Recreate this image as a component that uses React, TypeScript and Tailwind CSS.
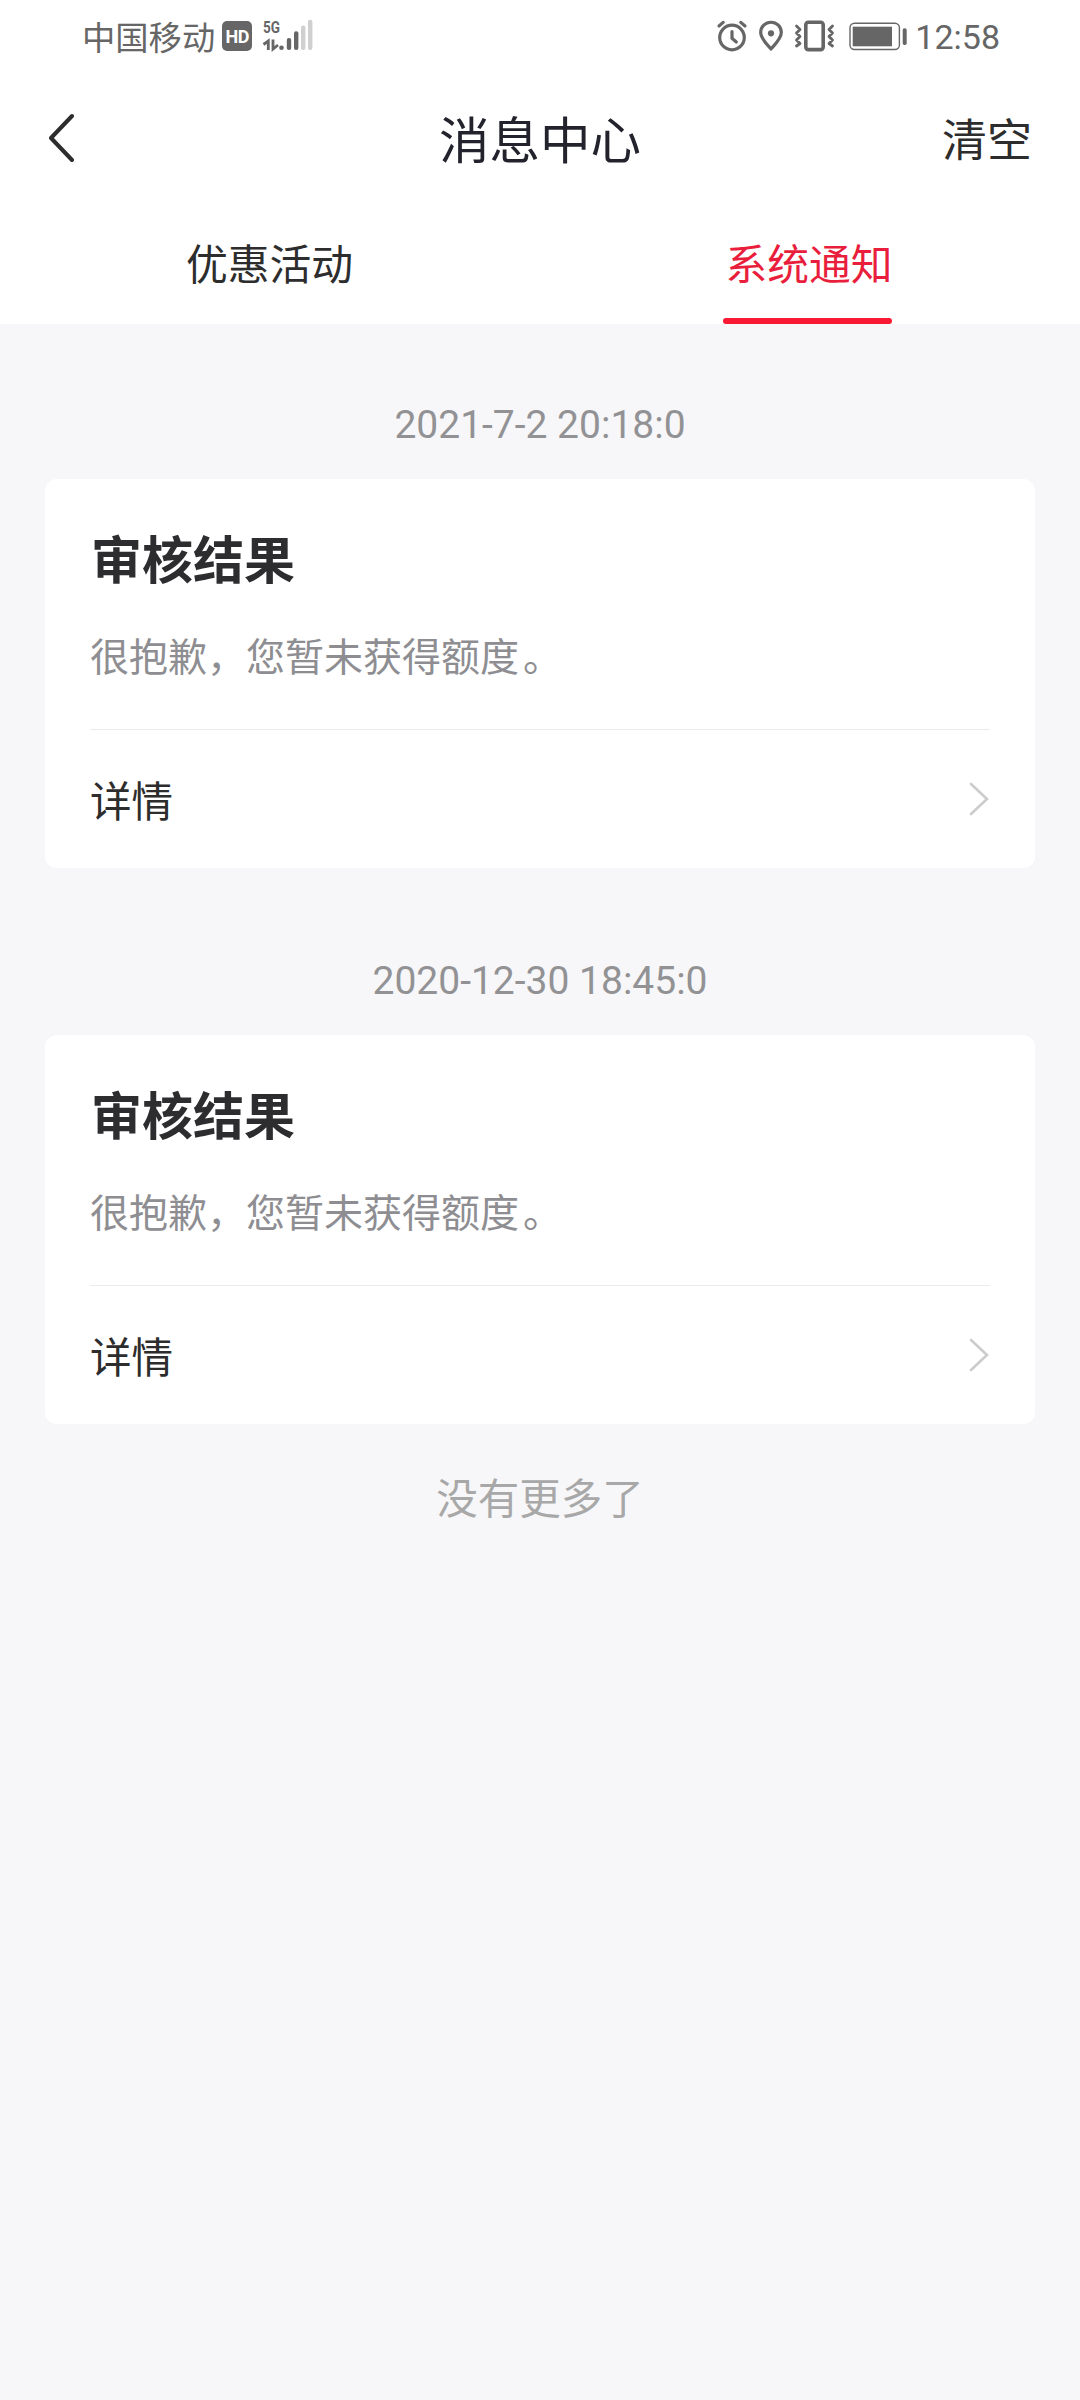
import { useState } from "react"

const messages = [
    { id: 1, time: "2021-7-2 20:18:0", title: "审核结果", body: "很抱歉，您暂未获得额度。" },
    { id: 2, time: "2020-12-30 18:45:0", title: "审核结果", body: "很抱歉，您暂未获得额度。" },
]

const tabs = ["优惠活动", "系统通知"]

function SignalIcon() {
    return (
        <svg className="ml-2.5" width="52" height="44" viewBox="262 14 52 44" fill="#666">
            <text x="263" y="34" fontSize="16" fontWeight="700" fontFamily="Roboto, sans-serif" textLength="17" lengthAdjust="spacingAndGlyphs">5G</text>
            <path d="M263.5 45.5L268.3 42V51M273 40.5V50L278 46" fill="none" stroke="#666" strokeWidth="2.8" />
            <circle cx="281.5" cy="48.8" r="2.3" />
            <rect x="286.8" y="39" width="4.4" height="12" rx="2" />
            <rect x="294" y="32.3" width="4.4" height="18.7" rx="2" />
            <rect x="301" y="26.5" width="4.4" height="24.5" rx="2" fill="#d0d0d0" />
            <rect x="308" y="20.8" width="4.4" height="30.2" rx="2" fill="#d0d0d0" />
        </svg>
    )
}

function SystemIcons() {
    return (
        <svg width="192" height="34" viewBox="716 19 192 34" fill="none" stroke="#666" strokeWidth="3.2" strokeLinecap="round" strokeLinejoin="round">
            <circle cx="732" cy="37.5" r="12.3" />
            <path d="M732 31.5V38.3L736.3 42M719 26L723.2 22.4M740.8 22.4L745 26" />
            <path d="M771 49C767 44.5 760.7 38.5 760.7 32.5A10.3 10.3 0 0 1 781.3 32.5C781.3 38.5 775 44.5 771 49Z" />
            <circle cx="771" cy="33.3" r="3.1" fill="#666" stroke="none" />
            <rect x="805.8" y="22.2" width="17.4" height="27.4" rx="2.5" strokeWidth="3.6" />
            <path d="M796.5 26L800 29.5L796.5 33L800 36.5L796.5 40L800 43.5L796.5 46M832.5 26L829 29.5L832.5 33L829 36.5L832.5 40L829 43.5L832.5 46" strokeWidth="2.8" />
            <rect x="850" y="23.3" width="49.4" height="26.2" rx="4.5" strokeWidth="1.4" />
            <rect x="852.7" y="26.7" width="39.3" height="19.6" fill="#666" stroke="none" />
            <rect x="902.7" y="28.3" width="4" height="16.7" rx="1.8" fill="#666" stroke="none" />
        </svg>
    )
}

function StatusBar() {
    return (
        <div className="flex h-[70px] items-center pl-[82px] pr-20 text-[#666]">
            <span className="pt-px text-[33.3px] leading-[70px]">中国移动</span>
            <span className="ml-[7px] mt-0.5 h-[30px] w-[30px] rounded-[5px] bg-[#666] text-center font-[Roboto,sans-serif] text-[18px] leading-[31px] font-bold tracking-[-0.5px] text-white">HD</span>
            <SignalIcon />
            <div className="ml-auto flex items-center">
                <div className="mt-0.5">
                    <SystemIcons />
                </div>
                <span className="ml-[7px] mt-[3px] font-[Roboto,sans-serif] text-[34px] leading-[66px]">12:58</span>
            </div>
        </div>
    )
}

function MessageBody({ text }: { text: string }) {
    return (
        <p className="mt-[37px] pb-[45px] text-[39px] leading-[60px] text-[#8e8e92]">
            {text.split(/(。)/).map((part, i) => (
                <span key={i} className={part === "。" ? "pl-1" : undefined}>{part}</span>
            ))}
        </p>
    )
}

function MessageCard({ title, body }: { title: string; body: string }) {
    return (
        <article className="mx-[45px] h-[389px] rounded-xl bg-white px-[45px] pt-12">
            <h2 className="pl-px text-[51px] leading-[60px] font-bold text-[#2d2d30]">{title}</h2>
            <MessageBody text={body} />
            <button className="flex h-[138px] w-full items-center justify-between border-t border-[#ebebeb]">
                <span className="pt-0.5 text-[41.5px] text-[#2d2d2d]">详情</span>
                <svg width="22" height="36" viewBox="0 0 22 36" fill="none" stroke="#ccc" strokeWidth="2.6" strokeLinecap="round">
                    <path d="M3 3L19 18L3 33" />
                </svg>
            </button>
        </article>
    )
}

export default function App() {
    const [active, setActive] = useState("系统通知")

    return (
        <div className="min-h-[2400px] w-[1080px] bg-[#f7f7f9] font-['Noto_Sans_CJK_SC',sans-serif]">
            <header className="bg-white">
                <StatusBar />
                <div className="grid h-[134px] grid-cols-3 items-center px-[47px] text-[#2d2d2d]">
                    <button>
                        <svg width="28" height="50" viewBox="0 0 28 50" fill="none" stroke="#2d2d2d" strokeWidth="4" strokeLinecap="round" strokeLinejoin="round">
                            <path d="M25 4L4 26L25 48" />
                        </svg>
                    </button>
                    <h1 className="pt-0.5 text-center text-[50.5px] text-[#23232d]">消息中心</h1>
                    <button className="pt-0.5 pr-px text-right text-[45px]">清空</button>
                </div>
                <nav className="grid h-[120px] grid-cols-2 pr-0.5">
                    {tabs.map(tab => (
                        <button key={tab} className="flex flex-col items-center" onClick={() => setActive(tab)}>
                            <span className={tab === active ? "h-[114px] pl-px text-[41.8px] leading-[116px] text-[#e91e3c]" : "h-[114px] text-[41.8px] leading-[116px] text-[#2d2d2d]"}>{tab}</span>
                            {tab === active && <span className="mr-0.5 h-1.5 w-[169px] rounded-full bg-[#fa1932]" />}
                        </button>
                    ))}
                </nav>
            </header>
            <main className="flex flex-col gap-[82px] pt-[70px]">
                {messages.map(m => (
                    <section key={m.id}>
                        <time className="block pt-px pb-6 text-center font-[Roboto,sans-serif] text-[39px] leading-[60px] text-[#929295]">{m.time}</time>
                        <MessageCard title={m.title} body={m.body} />
                    </section>
                ))}
            </main>
            <p className="pt-[42px] text-center text-[41.5px] leading-[60px] text-[#a8a8a8]">没有更多了</p>
        </div>
    )
}
